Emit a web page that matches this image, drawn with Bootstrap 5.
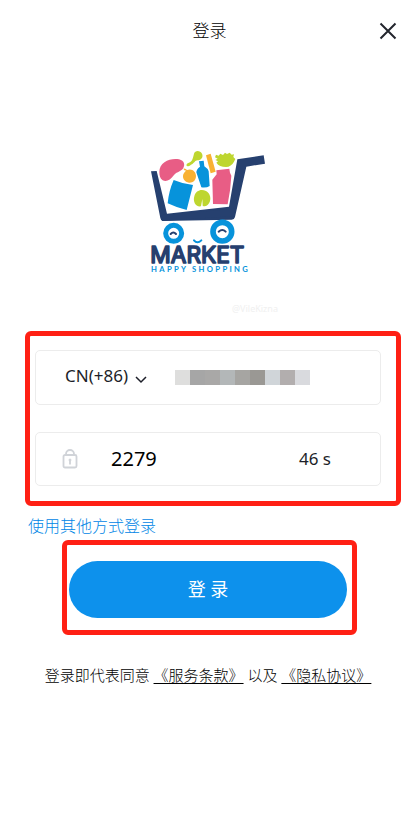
<!DOCTYPE html>
<html lang="zh-CN">
<head>
<meta charset="utf-8">
<meta name="viewport" content="width=device-width, initial-scale=1">
<title>登录</title>
<link href="https://cdn.jsdelivr.net/npm/bootstrap@5.3.0/dist/css/bootstrap.min.css" rel="stylesheet">
<style>
  body { font-family: "Noto Sans", "Noto Sans CJK SC", sans-serif; font-size: 16px; color: #1d1f29; background: #fff; }
  .title-bar { height: 62px; }
  .title-bar h1 { font-size: 17px; line-height: 24px; font-weight: 300; color: #000; }
  .title-bar button { width: 24px; height: 24px; right: 19px; }
  .brand { padding: 78px 0 0 140px; }
  .brand svg { width: 140px; height: 140px; }
  .watermark { font-size: 9px; line-height: 16px; color: #f0f0f0; padding-left: 232px; margin-top: 21px; margin-bottom: 14px; }
  .callout { border: 5px solid #ff2014; border-radius: 6px; }
  .callout-fields { margin: 0 18px 0 25px; padding: 14px 15px 15px 5px; }
  .callout-action { margin: 2px 62px 0 62px; padding: 16px 5px 12px 2px; }
  .field { height: 55px; border: 1px solid #ececec; border-radius: 5px; }
  .field + .field { margin-top: 27px; height: 54px; }
  .country { padding-left: 29px; width: 111px; }
  .country select { appearance: none; border: 0; background: none; width: 82px; padding: 0; color: #1d1f29; font-size: 17px; line-height: 24px; height: 28px; margin-bottom: 4px; }
  .country svg { width: 12px; height: 8px; right: 0; top: 14px; pointer-events: none; }
  .phone { min-width: 0; margin-left: 28px; height: 28px; border: 0;
    background: linear-gradient(to right, #dededd 15px, #a6a6a6 15px 30px, #a9a8a7 30px 45px, #b3b7b8 45px 60px, #a6a5a2 60px 75px, #9a9894 75px 90px, #d0d5d9 90px 105px, #b2aeae 105px 120px, #d9dade 120px 135px) no-repeat left center / 135px 15px; }
  .lock { width: 16px; height: 20px; margin-left: 26px; }
  .code { min-width: 0; width: 150px; margin-left: 33px; padding: 0; border: 0; font-size: 20px; line-height: 28px; color: #000; background: none; }
  .count { width: 81px; font-size: 17px; color: #1d1f29; }
  .other { margin-left: 28px; margin-top: 8px; line-height: 24px; color: #0086e6; font-weight: 300; }
  .submit { height: 57px; background: #0d91ec; font-size: 18px; color: #fff; border: 0; }
  .submit:hover { background: #0b82d4; color: #fff; }
  .terms { font-size: 15px; line-height: 24px; margin-top: 28px; padding-right: 3px; font-weight: 300; color: #000; }
  .terms a { color: inherit; text-underline-offset: 2px; }
  input:focus, select:focus { outline: 1px solid #0d91ec; }
</style>
</head>
<body>
<header class="title-bar d-flex align-items-center justify-content-center position-relative">
  <h1 class="m-0">登录</h1>
  <button type="button" class="btn p-0 border-0 position-absolute d-flex align-items-center justify-content-center" aria-label="关闭">
    <svg width="18" height="18" viewBox="0 0 18 18" fill="none" stroke="#23262e" stroke-width="2"><path d="M1.500 1.500l15 15M16.500 1.500l-15 15"/></svg>
  </button>
</header>
<main>
  <div class="brand">
    <svg class="d-block" viewBox="0 0 420 420" role="img" aria-label="Market Happy Shopping">
      <path fill="#26406f" d="M33 94L50 93 81 221 267 200 292 58 371 46 375 71 319 80 285 231Q283 239 275 239L67 243Q63 242 61 234Z"/>
      <path fill="#26406f" d="M61 226L285 206 283 228 67 243Z"/>
      <path fill="#e85d85" d="M58 96C58 66 92 53 117 58 134 62 135 76 130 84 124 95 112 94 102 105 91 121 79 126 68 121 60 116 58 106 58 96Z"/>
      <path fill="#bed62f" d="M162 41C165 30 181 31 186 41 191 52 183 60 173 61 164 62 163 69 156 73 151 74 149 80 143 79 137 77 139 70 147 68 155 65 158 59 162 41Z"/>
      <path fill="#f8b133" d="M198 46L212 41 227 95 212 100Z"/>
      <path fill="#bed62f" d="M225 52L228 44 236 47 241 41 249 45 255 38 261 42 269 38 275 44 282 43 280 51 286 57 282 65Q274 80 258 81 238 81 229 68L234 64 226 60 233 56Z"/>
      <path fill="#f8b133" d="M130 86Q136 84 141 90C155 84 168 94 168 108 168 121 158 129 147 128 134 127 126 115 130 103 132 98 135 94 139 92Q132 92 130 86Z"/>
      <path fill="#0793db" d="M177 64L191 62 193 79Q204 86 206 94L209 138Q200 144 184 142L169 97Q169 88 180 80Z"/>
      <path fill="#0793db" d="M101 120Q129 132 159 135L140 210Q110 203 83 190 86 154 101 120Z"/>
      <path fill="#e85d85" d="M229 91L268 86 270 98 274 107Q272 151 263 193L219 192 217 119 230 103Z"/>
      <path fill="#bed62f" d="M183 199C167 202 158 185 163 169 167 152 183 146 198 153 211 160 215 178 207 190 202 199 193 201 188 197L187 177Z"/>
      <circle cx="101" cy="280" r="24" fill="none" stroke="#0793db" stroke-width="15"/>
      <circle cx="247" cy="275" r="28" fill="none" stroke="#0793db" stroke-width="17"/>
      <path fill="none" stroke="#26406f" stroke-width="6" stroke-linecap="round" d="M92 282q8-9 16 0M236 275q11-10 21 0"/>
      <path fill="none" stroke="#0793db" stroke-width="6" stroke-linecap="round" d="M162 301q10 12 22 0"/>
      <text><tspan x="31" y="369" fill="#26406f" stroke="#26406f" stroke-width="5" stroke-linejoin="round" font-family="Inter, sans-serif" font-weight="400" font-size="68">MARKET</tspan><tspan x="33" y="396" fill="#0793db" font-family="Lato, sans-serif" font-weight="700" font-size="23" letter-spacing="7">HAPPY SHOPPING</tspan></text>
    </svg>
  </div>
  <div class="watermark" aria-hidden="true">@VileKizna</div>
  <form>
    <div class="callout callout-fields">
      <div class="field d-flex align-items-center">
        <div class="country position-relative">
          <select aria-label="国家区号"><option>CN(+86)</option></select>
          <svg class="position-absolute" viewBox="0 0 12 8" fill="none" stroke="#1d1f29" stroke-width="1.500"><path d="M1 1l5 5 5-5"/></svg>
        </div>
        <input class="phone flex-grow-1" type="tel" aria-label="手机号码">
      </div>
      <div class="field d-flex align-items-center">
        <svg class="lock flex-shrink-0" viewBox="0 0 16 20" fill="none" stroke="#d0d3d8" stroke-width="1.800"><rect x="1.500" y="6" width="13" height="12.500" rx="1.500"/><path d="M4 6V5a4 4 0 0 1 8 0v1M8 11.500v4"/><circle cx="8" cy="11" r="1" fill="#d0d3d8" stroke-width="1"/></svg>
        <input class="code" type="text" inputmode="numeric" aria-label="验证码" value="2279">
        <span class="count ms-auto">46 s</span>
      </div>
    </div>
    <div class="other"><a href="#" class="text-decoration-none text-reset">使用其他方式登录</a></div>
    <div class="callout callout-action">
      <button type="submit" class="submit btn rounded-pill w-100">登 录</button>
    </div>
  </form>
  <p class="terms text-center mb-0">登录即代表同意 <a href="#">《服务条款》</a> 以及 <a href="#">《隐私协议》</a></p>
</main>
<script src="https://cdn.jsdelivr.net/npm/bootstrap@5.3.0/dist/js/bootstrap.bundle.min.js"></script>
</body>
</html>
